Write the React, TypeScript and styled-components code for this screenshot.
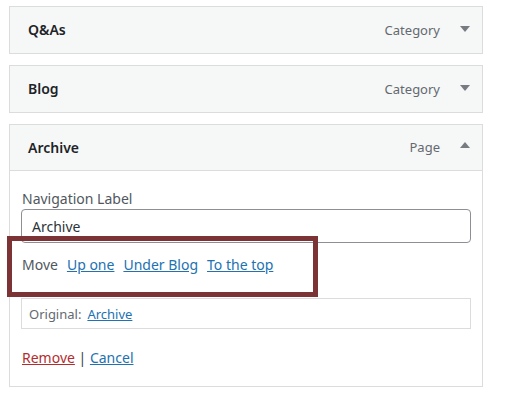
import { createGlobalStyle } from 'styled-components';
import styled from 'styled-components';

// SECTION: Styles

const Global = createGlobalStyle`
  html, body {
    margin: 0;
    background: #fff;
  }
  body {
    font-family: "Noto Sans", "Open Sans", sans-serif;
    color: #3c434a;
  }
`;

const Page = styled.div`
  position: relative;
  width: 518px;
  height: 413px;
  padding: 6px 0 0 9px;
  box-sizing: border-box;
  display: flex;
  flex-direction: column;
  gap: 11px;
`;

const Item = styled.div`
  width: 474px;
  box-sizing: border-box;
  border: 1px solid #dcdcde;
  background: #fff;
`;

const Bar = styled.div<{ $open?: boolean }>`
  height: 46px;
  display: flex;
  align-items: center;
  padding: 0 12px 1px 18px;
  box-sizing: border-box;
  background: #f6f7f7;
  border-bottom: ${(p) => (p.$open ? '1px solid #dcdcde' : 'none')};
`;

const Title = styled.span`
  flex: 1;
  font-size: 14px;
  font-weight: 600;
  color: #1d2327;
`;

const Type = styled.span`
  font-size: 13px;
  color: #646970;
  margin-right: 20px;
`;

const Arrow = styled.span<{ $up?: boolean }>`
  width: 0;
  height: 0;
  border-left: 5px solid transparent;
  border-right: 5px solid transparent;
  ${(p) =>
    p.$up ? 'border-bottom: 6px solid #787c82;' : 'border-top: 6px solid #787c82;'}
  margin-top: ${(p) => (p.$up ? '-4px' : '-2px')};
`;

const Settings = styled.div`
  padding: 18px 11px 18px 11px;
  display: flex;
  flex-direction: column;
`;

const Label = styled.label`
  font-size: 14px;
  line-height: 20px;
  color: #50575e;
  padding-left: 1px;
`;

const Input = styled.div`
  height: 34px;
  box-sizing: border-box;
  border: 1px solid #8c8f94;
  border-radius: 4px;
  padding: 0 10px;
  display: flex;
  align-items: center;
  font-size: 14px;
  color: #2c3338;
`;

const MoveRow = styled.div`
  margin-top: 12px;
  display: flex;
  gap: 9px;
  font-size: 14px;
  line-height: 20px;
  padding-left: 1px;
  color: #50575e;
`;

const Link = styled.a<{ $danger?: boolean }>`
  color: ${(p) => (p.$danger ? '#b32d2e' : '#2271b1')};
  text-decoration: underline;
  cursor: pointer;
`;

const Original = styled.div`
  margin-top: 23px;
  height: 31px;
  box-sizing: border-box;
  border: 1px solid #dcdcde;
  padding: 0 7px;
  display: flex;
  align-items: center;
  gap: 6px;
  font-size: 13px;
  color: #646970;
`;

const Actions = styled.div`
  margin-top: 19px;
  font-size: 14px;
  line-height: 20px;
  padding-left: 1px;
  color: #3c434a;
`;

const Highlight = styled.div`
  position: absolute;
  left: 7px;
  top: 236px;
  width: 311px;
  height: 61px;
  box-sizing: border-box;
  border: 5px solid #7b3336;
  pointer-events: none;
`;
// !SECTION

// SECTION: Main

const items = [
  { title: 'Q&As', type: 'Category' },
  { title: 'Blog', type: 'Category' },
];

const App = () => (
  <Page>
    <Global />
    {items.map((item) => (
      <Item key={item.title}>
        <Bar>
          <Title>{item.title}</Title>
          <Type>{item.type}</Type>
          <Arrow />
        </Bar>
      </Item>
    ))}
    <Item>
      <Bar $open>
        <Title>Archive</Title>
        <Type>Page</Type>
        <Arrow $up />
      </Bar>
      <Settings>
        <Label>Navigation Label</Label>
        <Input>Archive</Input>
        <MoveRow>
          <span>Move</span>
          <Link>Up one</Link>
          <Link>Under Blog</Link>
          <Link>To the top</Link>
        </MoveRow>
        <Original>
          <span>Original:</span>
          <Link>Archive</Link>
        </Original>
        <Actions>
          <Link $danger>Remove</Link> | <Link>Cancel</Link>
        </Actions>
      </Settings>
    </Item>
    <Highlight />
  </Page>
);

export default App;
